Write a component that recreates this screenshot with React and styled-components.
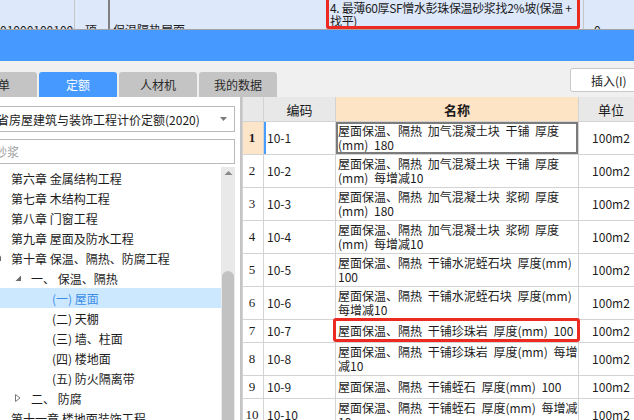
import React from "react";
import styled, { createGlobalStyle } from "styled-components";

const GlobalStyle = createGlobalStyle`
  html, body {
    margin: 0;
    padding: 0;
  }
  body {
    width: 634px;
    height: 420px;
    overflow: hidden;
    background: #fff;
    color: #1c1c1c;
    font-family: "Noto Sans CJK SC", "Liberation Sans", sans-serif;
    font-size: 12px;
  }
`;

const Page = styled.div`
  width: 634px;
  height: 420px;
  overflow: hidden;
  display: flex;
  flex-direction: column;
`;

/* upper grid, only its last row peeks in */
const TopStrip = styled.div`
  flex: none;
  height: 29px;
  display: flex;
  background: #dde8fb;
  border-bottom: 1px solid #a5a5a5;
  overflow: hidden;
`;

const StripCell = styled.div`
  flex: none;
  width: ${(p) => p.$w}px;
  box-sizing: border-box;
  padding: 23px ${(p) => p.$pr || 0}px 0 ${(p) => p.$pl || 0}px;
  border-right: ${(p) => p.$line || "none"};
  border-left: ${(p) => p.$lineLeft || "none"};
  text-align: ${(p) => p.$align || "left"};
  line-height: 14px;
  white-space: nowrap;
  overflow: hidden;
`;

const NoteBox = styled.div`
  flex: none;
  width: 254px;
  box-sizing: border-box;
  border: 3px solid #ec2a22;
  border-top-width: 0;
  border-radius: 0 0 3px 3px;
  padding: 1px 0 0 1px;
  margin-right: 3px;
  line-height: 13px;
  font-size: 12px;
  letter-spacing: -0.35px;
  white-space: nowrap;
  overflow: hidden;
`;

const BlueBar = styled.div`
  flex: none;
  height: 31px;
  background: #4599ff;
`;

const TabBar = styled.div`
  flex: none;
  height: 36px;
  display: flex;
  align-items: flex-end;
  background: #f0f0f0;
`;

const Tabs = styled.div`
  display: flex;
  gap: 2px;
  margin-left: -41px;
`;

const Tab = styled.div`
  width: 78px;
  height: 25px;
  display: flex;
  align-items: center;
  justify-content: center;
  border-radius: 3px 3px 0 0;
  background: ${(p) => (p.$active ? "#4599ff" : "#c4c4c4")};
  color: ${(p) => (p.$active ? "#fff" : "#2a2a2a")};
  font-size: 12px;
`;

const InsertButton = styled.div`
  align-self: flex-start;
  margin: 7px -8px 0 auto;
  width: 72px;
  height: 24px;
  box-sizing: border-box;
  display: flex;
  align-items: center;
  padding-left: 20px;
  background: #fff;
  border: 1px solid #c9c9c9;
  border-radius: 3px;
  font-size: 12px;
  color: #222;
`;

const Main = styled.div`
  flex: 1;
  display: flex;
  min-height: 0;
`;

const LeftPanel = styled.div`
  flex: none;
  width: 240px;
  display: flex;
  flex-direction: column;
  padding-top: 9px;
  box-sizing: border-box;
  background: #fff;
  overflow: hidden;
`;

const Field = styled.div`
  flex: none;
  margin-left: -40px;
  margin-top: ${(p) => p.$mt || 0}px;
  width: 275px;
  height: ${(p) => p.$h}px;
  box-sizing: border-box;
  display: flex;
  align-items: center;
  padding-left: ${(p) => p.$pl}px;
  border: 1px solid #b9b9b9;
  color: ${(p) => (p.$placeholder ? "#9c9c9c" : "#1c1c1c")};
  font-size: 12px;
  white-space: nowrap;
`;

const DropArrow = styled.svg`
  margin-left: auto;
  margin-right: 7px;
`;

const TreeArea = styled.div`
  flex: 1;
  display: flex;
  margin-top: 3px;
  min-height: 0;
`;

const TreeList = styled.div`
  flex: 1;
  padding-top: 1px;
  overflow: hidden;
`;

const TreeItem = styled.div`
  height: 20px;
  display: flex;
  align-items: center;
  padding-left: ${(p) => p.$indent}px;
  background: ${(p) => (p.$selected ? "#cce8ff" : "transparent")};
  color: ${(p) => (p.$selected ? "#3d8ee8" : "#1c1c1c")};
  white-space: nowrap;
  font-size: 12px;
`;

const Caret = styled.span`
  flex: none;
  width: 16px;
  margin-left: ${(p) => p.$ml || 0}px;
  display: flex;
  align-items: center;
`;

const ScrollTrack = styled.div`
  flex: none;
  width: 14px;
  margin-right: 5px;
  display: flex;
  flex-direction: column;
  align-items: center;
  background: #e9e9e9;
`;

const ScrollThumb = styled.div`
  flex: 1;
  width: 12px;
  margin-top: 92px;
  border-radius: 6px 6px 0 0;
  background: #c2c2c2;
`;

const TableWrap = styled.div`
  flex: 1;
  border-left: 2px solid #c4c4c4;
  overflow: hidden;
  background: #fff;
`;

const Grid = styled.table`
  border-collapse: collapse;
  table-layout: fixed;
  width: 401px;
`;

const HeadCell = styled.th`
  height: 24px;
  padding: 0;
  border: 1px solid #d3d3d3;
  border-top: none;
  background: ${(p) => (p.$hl ? "#fde4c5" : "#e8e8e8")};
  font-weight: ${(p) => (p.$hl ? 700 : 400)};
  font-size: 13px;
  color: #1a1a1a;
`;

const Cell = styled.td`
  position: relative;
  height: ${(p) => p.$h - 1}px;
  padding: 0 2px 0 ${(p) => p.$pl ?? 2}px;
  border: 1px solid #d3d3d3;
  text-align: ${(p) => p.$align || "left"};
  line-height: 14px;
  font-size: 12px;
  word-spacing: 3px;
  white-space: nowrap;
  overflow: visible;
`;

const NumCell = styled(Cell)`
  font-family: "Liberation Serif", serif;
  font-size: 13px;
  font-weight: ${(p) => (p.$current ? 700 : 400)};
  background: ${(p) => (p.$current ? "#fde5c9" : "#fff")};
`;

const CodeCell = styled(Cell)`
  box-shadow: ${(p) => (p.$current ? "inset 2px 0 0 #4a9cff" : "none")};
`;

const NameCell = styled(Cell)`
  box-shadow: ${(p) => (p.$current ? "inset 0 0 0 2px #7b7b7b" : "none")};
  &::after {
    content: "";
    display: ${(p) => (p.$marked ? "block" : "none")};
    position: absolute;
    inset: -2px -2px 0 -3px;
    border: 3px solid #ec2a22;
    border-radius: 3px;
  }
`;

const ExpandedCaret = () => (
  <svg width="7" height="7" viewBox="0 0 7 7">
    <path d="M6 0.5 L6 6 L0.5 6 Z" fill="#6b6b6b" />
  </svg>
);

const CollapsedCaret = () => (
  <svg width="6" height="8" viewBox="0 0 6 8">
    <path d="M0.5 0.5 L5 4 L0.5 7.5 Z" fill="#fff" stroke="#7a7a7a" strokeWidth="1" />
  </svg>
);

const tree = [
  { text: "第六章 金属结构工程", indent: 11 },
  { text: "第七章 木结构工程", indent: 11 },
  { text: "第八章 门窗工程", indent: 11 },
  { text: "第九章 屋面及防水工程", indent: 11 },
  { text: "第十章 保温、隔热、防腐工程", indent: 0, caret: "open", ml: -5 },
  { text: "一、\u00a0保温、隔热", indent: 15, caret: "open" },
  { text: "(一) 屋面", indent: 52, selected: true },
  { text: "(二) 天棚", indent: 52 },
  { text: "(三) 墙、柱面", indent: 52 },
  { text: "(四) 楼地面", indent: 52 },
  { text: "(五) 防火隔离带", indent: 52 },
  { text: "二、\u00a0防腐", indent: 15, caret: "closed" },
  { text: "第十一章 楼地面装饰工程", indent: 11 },
];

const rows = [
  { code: "10-1", name: ["屋面保温、隔热 加气混凝土块 干铺 厚度", "(mm) 180"] },
  { code: "10-2", name: ["屋面保温、隔热 加气混凝土块 干铺 厚度", "(mm) 每增减10"] },
  { code: "10-3", name: ["屋面保温、隔热 加气混凝土块 浆砌 厚度", "(mm) 180"] },
  { code: "10-4", name: ["屋面保温、隔热 加气混凝土块 浆砌 厚度", "(mm) 每增减10"] },
  { code: "10-5", name: ["屋面保温、隔热 干铺水泥蛭石块 厚度(mm)", "100"] },
  { code: "10-6", name: ["屋面保温、隔热 干铺水泥蛭石块 厚度(mm)", "每增减10"] },
  { code: "10-7", name: ["屋面保温、隔热 干铺珍珠岩 厚度(mm) 100"], marked: true },
  { code: "10-8", name: ["屋面保温、隔热 干铺珍珠岩 厚度(mm) 每增", "减10"] },
  { code: "10-9", name: ["屋面保温、隔热 干铺蛭石 厚度(mm) 100"] },
  { code: "10-10", name: ["屋面保温、隔热 干铺蛭石 厚度(mm) 每增减", "10"] },
];

const App = () => {
  return (
    <Page>
      <GlobalStyle />
      <TopStrip>
        <StripCell $w={75} $pr={24} $align="right" $line="1px solid #c6c6c6">
          010001001000
        </StripCell>
        <StripCell $w={35} $pl={10} $line="2px solid #808080">
          项
        </StripCell>
        <StripCell $w={216} $pl={3}>
          保温隔热屋面
        </StripCell>
        <NoteBox>
          4. 最薄60厚SF憎水彭珠保温砂浆找2%坡(保温 +
          <br />
          找平)
        </NoteBox>
        <StripCell $w={60} $pl={10} $lineLeft="1px solid #c6c6c6">
          0
        </StripCell>
      </TopStrip>

      <BlueBar />

      <TabBar>
        <Tabs>
          <Tab>清单</Tab>
          <Tab $active>定额</Tab>
          <Tab>人材机</Tab>
          <Tab>我的数据</Tab>
        </Tabs>
        <InsertButton>插入(I)</InsertButton>
      </TabBar>

      <Main>
        <LeftPanel>
          <Field $h={26} $pl={12}>
            江苏省房屋建筑与装饰工程计价定额(2020)
            <DropArrow width="7" height="4" viewBox="0 0 7 4">
              <path d="M0 0 L7 0 L3.5 4 Z" fill="#7a7a7a" />
            </DropArrow>
          </Field>
          <Field $h={25} $mt={7} $pl={34} $placeholder>
            砂浆
          </Field>
          <TreeArea>
            <TreeList>
              {tree.map((item) => (
                <TreeItem key={item.text} $indent={item.indent} $selected={item.selected}>
                  {item.caret && (
                    <Caret $ml={item.ml}>
                      {item.caret === "open" ? <ExpandedCaret /> : <CollapsedCaret />}
                    </Caret>
                  )}
                  {item.text}
                </TreeItem>
              ))}
            </TreeList>
            <ScrollTrack>
              <svg width="9" height="12" viewBox="0 0 9 12" style={{ flex: "none" }}>
                <path d="M0.5 8 L4.5 4 L8.5 8 Z" fill="#8a8a8a" />
              </svg>
              <ScrollThumb />
            </ScrollTrack>
          </TreeArea>
        </LeftPanel>

        <TableWrap>
          <Grid>
            <colgroup>
              <col style={{ width: 21 }} />
              <col style={{ width: 72 }} />
              <col style={{ width: 243 }} />
              <col style={{ width: 65 }} />
            </colgroup>
            <thead>
              <tr>
                <HeadCell />
                <HeadCell>编码</HeadCell>
                <HeadCell $hl>名称</HeadCell>
                <HeadCell>单位</HeadCell>
              </tr>
            </thead>
            <tbody>
              {rows.map((row, i) => {
                const h = row.name.length > 1 ? 33 : 23;
                const current = i === 0;
                return (
                  <tr key={row.code}>
                    <NumCell $h={h} $align="center" $pl={0} $current={current}>
                      {i + 1}
                    </NumCell>
                    <CodeCell $h={h} $pl={3} $current={current}>
                      {row.code}
                    </CodeCell>
                    <NameCell $h={h} $current={current} $marked={row.marked}>
                      {row.name[0]}
                      {row.name[1] && <br />}
                      {row.name[1]}
                    </NameCell>
                    <Cell $h={h} $align="center">
                      100m2
                    </Cell>
                  </tr>
                );
              })}
            </tbody>
          </Grid>
        </TableWrap>
      </Main>
    </Page>
  );
};

export default App;
